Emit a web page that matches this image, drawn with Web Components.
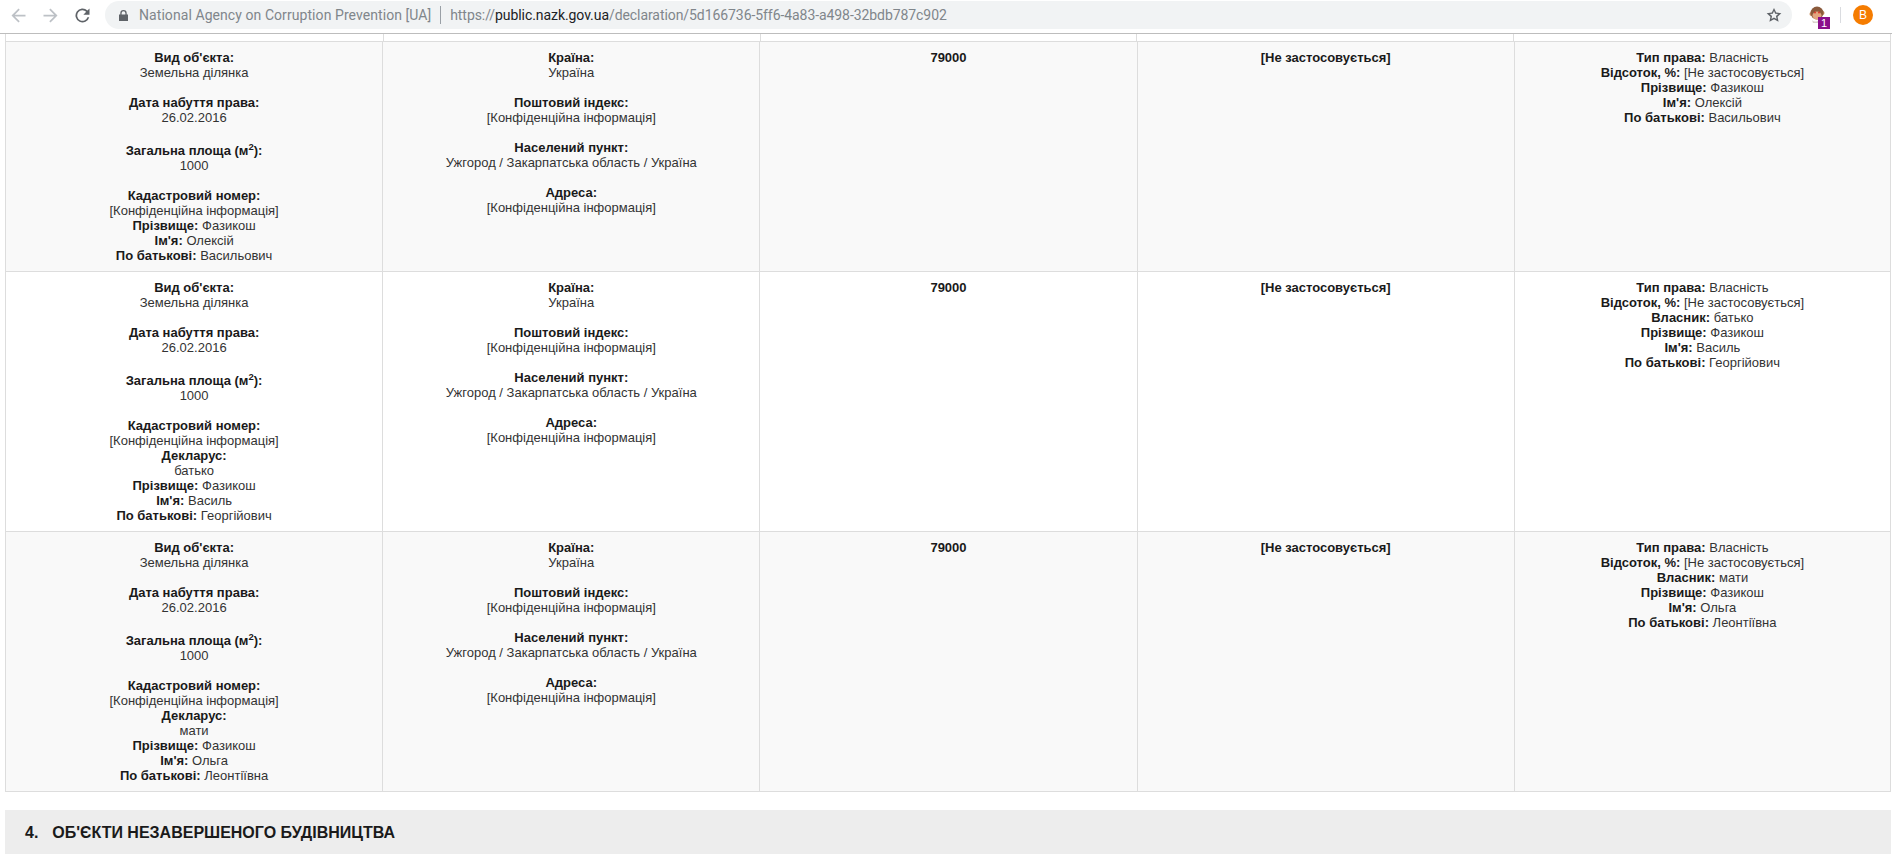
<!DOCTYPE html>
<html><head><meta charset="utf-8"><style>html,body{margin:0;height:857px;overflow:hidden;background:#fff}</style></head>
<body>
<browser-bar></browser-bar>
<decl-page></decl-page>
<script>
const OBJECTS = [
  { declarant: null, surname: "Фазикош", name: "Олексій", patronymic: "Васильович", owner: null, height: 230, shade: true },
  { declarant: "батько", surname: "Фазикош", name: "Василь", patronymic: "Георгійович", owner: "батько", height: 260, shade: false },
  { declarant: "мати", surname: "Фазикош", name: "Ольга", patronymic: "Леонтіївна", owner: "мати", height: 260, shade: true },
];

class BrowserBar extends HTMLElement {
  constructor() {
    super();
    this.attachShadow({ mode: "open" });
    this.shadowRoot.innerHTML = `
    <style>
      :host { display:flex; align-items:center; height:30px; padding-bottom:3px; background:#fff; font:14px Roboto,"Liberation Sans",sans-serif; color:#80868b; border-bottom:1px solid #bdbdbd; box-sizing:content-box; }
      svg { display:block; flex:none; }
      .nav { display:flex; align-items:center; gap:11px; padding-left:8px; width:105px; box-sizing:border-box; flex:none; }
      .url { flex:1; height:28px; background:#f1f3f4; border-radius:14px; display:flex; align-items:center; padding:0 9px 0 14px; gap:9px; white-space:nowrap; }
      .sep { width:1px; height:18px; background:#9aa0a6; }
      .title { margin-left:2px; letter-spacing:.07px; }
      .addr { letter-spacing:-.07px; }
      .url b { font-weight:400; color:#202124; }
      .end { display:flex; align-items:center; width:100px; padding-left:17px; box-sizing:border-box; flex:none; }
      .div { width:1px; height:16px; background:#dadce0; margin-left:9px; }
      .av { width:20px; height:20px; border-radius:50%; background:#f57c00; color:#fff; font:12px "Liberation Sans",sans-serif; display:flex; align-items:center; justify-content:center; margin-left:12px; }
    </style>
    <div class="nav">
      <svg width="21" height="21" viewBox="0 0 24 24" fill="#bdc1c6"><path d="M20 11H7.8l5.6-5.6L12 4l-8 8 8 8 1.4-1.4L7.8 13H20z"/></svg>
      <svg width="21" height="21" viewBox="0 0 24 24" fill="#bdc1c6"><path d="M4 11h12.2l-5.6-5.6L12 4l8 8-8 8-1.4-1.4 5.6-5.6H4z"/></svg>
      <svg width="21" height="21" viewBox="0 0 24 24" fill="#5f6368"><path d="M17.65 6.35A8 8 0 1 0 19.73 14h-2.08a6 6 0 1 1-1.41-6.24L13 11h7V4z"/></svg>
    </div>
    <div class="url">
      <svg width="9" height="11" viewBox="0 0 9 11" fill="#5f6368"><path fill-rule="evenodd" d="M1.3 4.5V3.2a3.2 3.2 0 0 1 6.4 0v1.3H9V11H0V4.5zM2.6 4.5h3.8V3.2a1.9 1.9 0 0 0-3.8 0z"/></svg>
      <span class="title">National Agency on Corruption Prevention [UA]</span><i class="sep"></i>
      <span class="addr">https://<b>public.nazk.gov.ua</b>/declaration/5d166736-5ff6-4a83-a498-32bdb787c902</span>
      <svg style="margin-left:auto" width="18" height="18" viewBox="0 0 24 24" fill="#5f6368"><path d="M12 2.5l2.9 6.3 6.9.8-5.1 4.7 1.4 6.8L12 17.6l-6.1 3.5 1.4-6.8-5.1-4.7 6.9-.8zm0 4.2l-1.6 3.6-3.9.4 2.9 2.7-.8 3.8 3.4-2 3.4 2-.8-3.8 2.9-2.7-3.9-.4z"/></svg>
    </div>
    <div class="end">
      <svg width="22" height="28" viewBox="0 0 22 28">
        <circle cx="2.5" cy="13" r="2" fill="#c98b5e"/><circle cx="13.5" cy="12" r="2" fill="#c98b5e"/>
        <circle cx="8" cy="12" r="6.5" fill="#8a5a3c"/>
        <ellipse cx="8" cy="14.5" rx="4.5" ry="4" fill="#e3a67f"/>
        <circle cx="6" cy="11.5" r="1" fill="#d8392b"/><circle cx="10" cy="11.5" r="1" fill="#d8392b"/>
        <path d="M3 19c2 2 5 2 7 0l0 3H4z" fill="#d9d3cc"/>
        <rect x="9" y="16" width="12" height="12" fill="#8b0f8b"/>
        <text x="15" y="26" font-size="11" fill="#fff" text-anchor="middle" font-family="Liberation Sans">1</text>
      </svg>
      <i class="div"></i>
      <span class="av">B</span>
    </div>`;
  }
}

class FieldItem extends HTMLElement {
  constructor() {
    super();
    this.attachShadow({ mode: "open" });
    this.shadowRoot.innerHTML = `
    <style>
      :host { display:block; }
      b { font-weight:700; color:#1a1a1a; }
      :host([stack]) b, :host([stack]) span { display:block; }
      :host([gap]) { margin-bottom:15px; }
      :host([raised]) { padding-top:3px; }
      sup { font-size:9.5px; line-height:0; vertical-align:baseline; position:relative; top:-.55em; }
    </style>
    <b>${this.getAttribute("label")}</b> <span><slot></slot></span>`;
  }
}

class DeclRow extends HTMLElement {
  constructor() {
    super();
    this.attachShadow({ mode: "open" });
  }
  set data(d) {
    const left = `
      <field-item stack gap label="Вид об'єкта:">Земельна ділянка</field-item>
      <field-item stack gap label="Дата набуття права:">26.02.2016</field-item>
      <field-item stack gap raised label="Загальна площа (м<sup>2</sup>):">1000</field-item>
      <field-item stack label="Кадастровий номер:">[Конфіденційна інформація]</field-item>
      ${d.declarant ? `<field-item stack label="Декларус:">${d.declarant}</field-item>` : ""}
      <field-item label="Прізвище:">${d.surname}</field-item>
      <field-item label="Ім'я:">${d.name}</field-item>
      <field-item label="По батькові:">${d.patronymic}</field-item>`;
    const addr = `
      <field-item stack gap label="Країна:">Україна</field-item>
      <field-item stack gap label="Поштовий індекс:">[Конфіденційна інформація]</field-item>
      <field-item stack gap label="Населений пункт:">Ужгород / Закарпатська область / Україна</field-item>
      <field-item stack label="Адреса:">[Конфіденційна інформація]</field-item>`;
    const right = `
      <field-item label="Тип права:">Власність</field-item>
      <field-item label="Відсоток, %:">[Не застосовується]</field-item>
      ${d.owner ? `<field-item label="Власник:">${d.owner}</field-item>` : ""}
      <field-item label="Прізвище:">${d.surname}</field-item>
      <field-item label="Ім'я:">${d.name}</field-item>
      <field-item label="По батькові:">${d.patronymic}</field-item>`;
    this.shadowRoot.innerHTML = `
    <style>
      :host { display:grid; grid-template-columns:repeat(5,1fr); height:${d.height}px; background:${d.shade ? "#f9f9f9" : "#fff"}; border-top:1px solid #ddd; box-sizing:border-box; }
      div { border-left:1px solid #ddd; padding:8px; text-align:center; box-sizing:border-box; }
      div:last-child { border-right:1px solid #ddd; }
      b { color:#1a1a1a; display:block; }
    </style>
    <div>${left}</div><div>${addr}</div><div><b>79000</b></div><div><b>[Не застосовується]</b></div><div>${right}</div>`;
  }
}

class DeclPage extends HTMLElement {
  constructor() {
    super();
    this.attachShadow({ mode: "open" });
    this.shadowRoot.innerHTML = `
    <style>
      :host { display:block; padding:0 1px 0 5px; font:13px/15px "Liberation Sans",Arial,sans-serif; color:#333; }
      .top { height:7px; display:grid; grid-template-columns:repeat(5,1fr); border-left:1px solid #ddd; border-right:1px solid #ddd; }
      .top i { border-left:1px solid #ddd; }
      .top i:first-child { border-left:0; }
      .rows { border-bottom:1px solid #ddd; }
      h2 { margin:18px 0 0; background:#ededed; height:44px; display:flex; align-items:center; padding-left:20px; font-size:16px; color:#1a1a1a; gap:14px; }
    </style>
    <div class="top"><i></i><i></i><i></i><i></i><i></i></div>
    <div class="rows" id="rows"></div>
    <h2><span>4.</span><span>ОБ'ЄКТИ НЕЗАВЕРШЕНОГО БУДІВНИЦТВА</span></h2>`;
    const rows = this.shadowRoot.getElementById("rows");
    for (const o of OBJECTS) {
      const row = document.createElement("decl-row");
      row.data = o;
      rows.append(row);
    }
  }
}

customElements.define("browser-bar", BrowserBar);
customElements.define("field-item", FieldItem);
customElements.define("decl-row", DeclRow);
customElements.define("decl-page", DeclPage);
</script>
</body></html>
